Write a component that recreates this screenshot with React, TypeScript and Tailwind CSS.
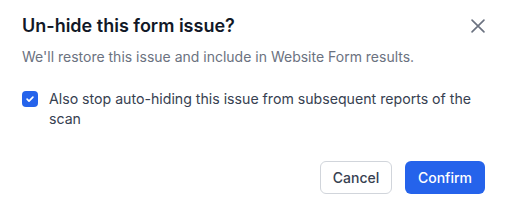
import React from "react";

export default function App() {
  return (
    <div className="w-[507px] h-[209px] bg-white" style={{ fontFamily: "Inter, 'Noto Sans', sans-serif" }}>
      <div className="px-[22px] pt-[12px]">
        <div className="flex items-start justify-between">
          <h2 className="text-[18px] leading-[28px] font-semibold text-[#111827]">Un-hide this form issue?</h2>
          <button className="mt-[3px] mr-[-4px] text-[#6b7280]">
            <svg width="22" height="22" viewBox="0 0 24 24" fill="none" stroke="currentColor" strokeWidth="1.8" strokeLinecap="round">
              <path d="M5.5 5.5l13 13M18.5 5.5l-13 13" />
            </svg>
          </button>
        </div>
        <p className="mt-[7px] text-[14px] leading-[20px] text-[#6b7280]">We'll restore this issue and include in Website Form results.</p>
        <label className="mt-[22px] flex items-start gap-[11px]">
          <span className="mt-[2px] w-[16px] h-[16px] rounded-[4px] bg-[#2563eb] flex items-center justify-center shrink-0">
            <svg width="10" height="10" viewBox="0 0 12 12" fill="none" stroke="white" strokeWidth="2" strokeLinecap="round" strokeLinejoin="round">
              <path d="M2.5 6.2l2.3 2.3 4.7-4.8" />
            </svg>
          </span>
          <span className="text-[14.15px] leading-[20px] text-[#374151]">Also stop auto-hiding this issue from subsequent reports of the scan</span>
        </label>
        <div className="mt-[32px] flex justify-end gap-[13px]">
          <button className="h-[33px] w-[72px] rounded-[6px] border border-[#d1d5db] bg-white text-[14px] font-medium text-[#374151]">Cancel</button>
          <button className="h-[33px] w-[80px] rounded-[6px] bg-[#2563eb] text-[14px] font-medium text-white">Confirm</button>
        </div>
      </div>
    </div>
  );
}
